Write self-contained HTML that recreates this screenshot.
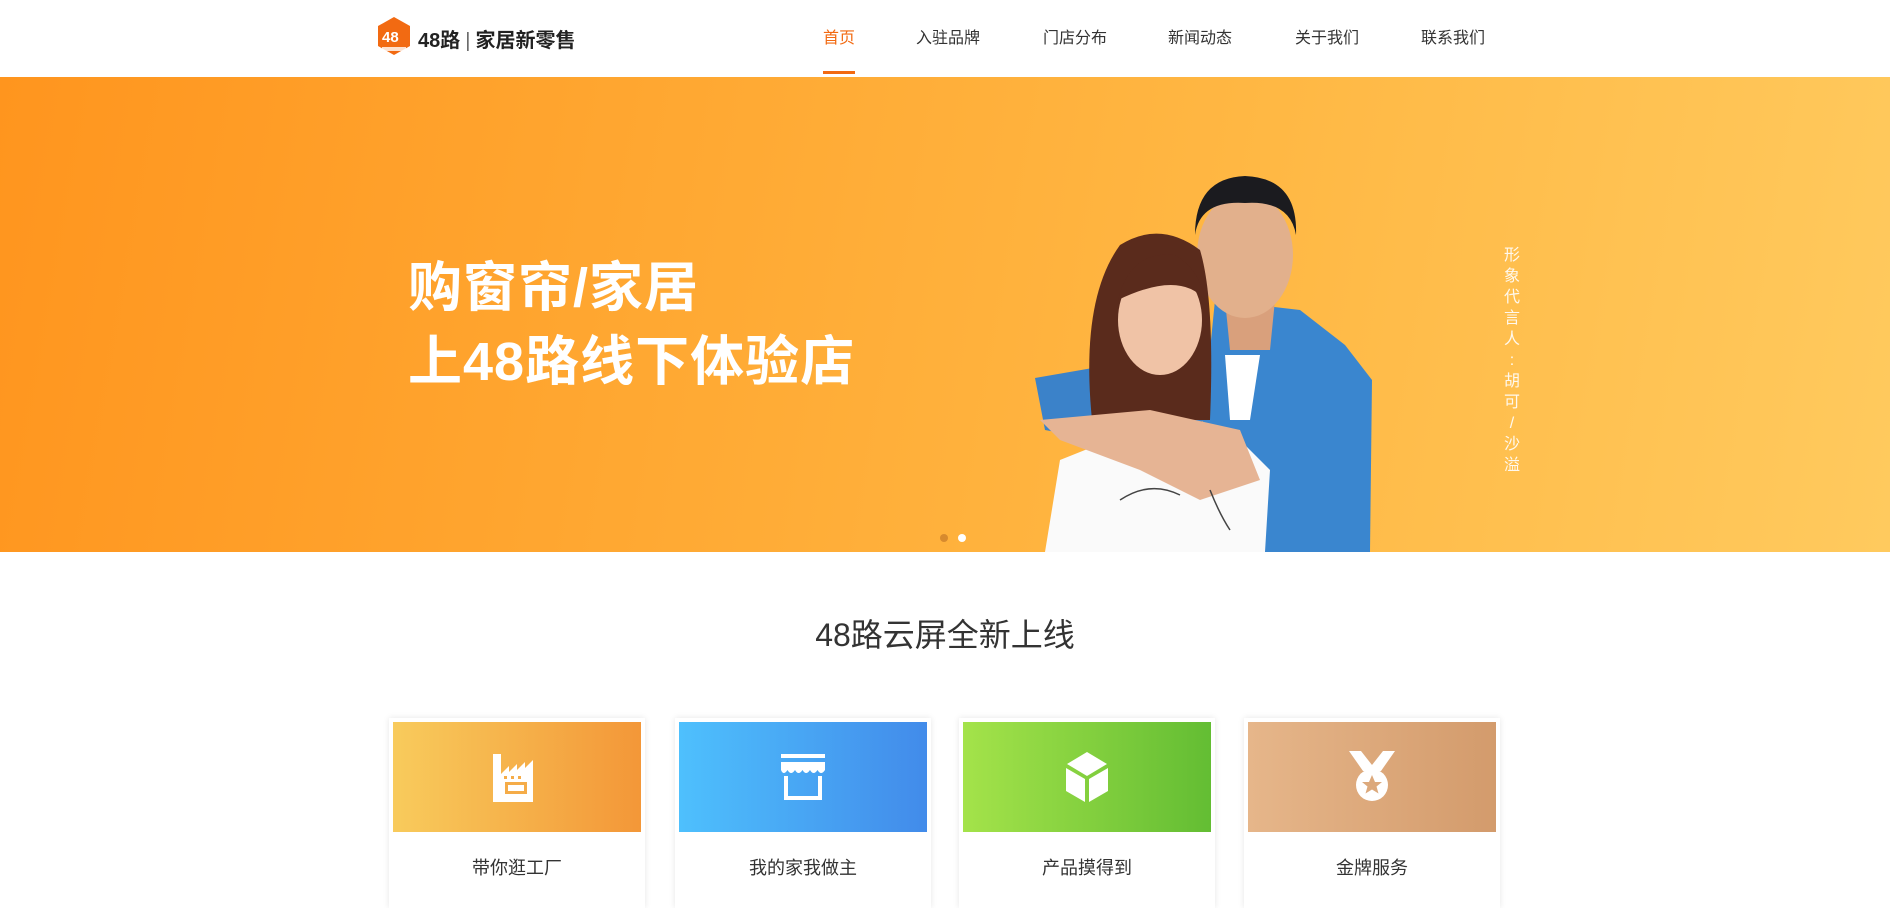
<!DOCTYPE html>
<html><head><meta charset="utf-8"><style>
*{margin:0;padding:0;box-sizing:border-box}
body{width:1890px;height:900px;overflow:hidden;background:#fff;font-family:"Liberation Sans","Noto Sans CJK SC",sans-serif;position:relative}
.hdr{position:absolute;left:0;top:0;width:1890px;height:77px;background:#fff}
.nav a{position:absolute;top:24px;font-size:16px;color:#333;text-decoration:none;white-space:nowrap}
.banner{position:absolute;left:0;top:77px;width:1890px;height:475px;background:linear-gradient(100deg,#ff951e 0%,#ffa832 35%,#ffb844 65%,#ffca5e 100%);overflow:hidden}
.h1{position:absolute;left:408px;color:#fff;font-size:54px;font-weight:bold;letter-spacing:1px;white-space:nowrap;-webkit-text-stroke:0}
.vt{position:absolute;left:1503px;top:168px;width:18px;color:#fff;font-size:16px;line-height:21px;text-align:center;opacity:.9}
.title{position:absolute;left:0;width:1890px;top:610px;text-align:center;font-size:32px;color:#333}
.card{position:absolute;top:718px;width:256px;height:190px;background:#fff;box-shadow:0 0 6px rgba(0,0,0,.1)}
.card .img{position:absolute;left:4px;top:4px;width:248px;height:110px;display:flex;align-items:center;justify-content:center}
.card .lb{position:absolute;left:0;width:256px;top:136px;text-align:center;font-size:18px;color:#333}
</style></head><body>
<div class="hdr">
 <svg style="position:absolute;left:376px;top:16px" width="36" height="40" viewBox="0 0 36 40"><path d="M18 1 L34 10 V30 L18 39 L2 30 V10Z" fill="#f26a12"/><text x="6" y="26" font-size="15" fill="#fff" font-family="Liberation Sans" font-weight="bold">48</text><rect x="6" y="31" width="24" height="4" fill="#fff" opacity=".8"/></svg>
 <div style="position:absolute;left:418px;top:24px;font-size:20px;font-weight:bold;color:#222;white-space:nowrap">48路<span style="font-weight:normal;color:#666;margin:0 5px">|</span>家居新零售</div>
 <div class="nav">
  <a style="left:823px;color:#f26a12">首页</a>
  <a style="left:916px">入驻品牌</a>
  <a style="left:1043px">门店分布</a>
  <a style="left:1168px">新闻动态</a>
  <a style="left:1295px">关于我们</a>
  <a style="left:1421px">联系我们</a>
 </div>
 <div style="position:absolute;left:823px;top:71px;width:32px;height:3px;background:#f26a12"></div>
</div>
<div class="banner">
 <div class="h1" style="top:166px">购窗帘/家居</div>
 <div class="h1" style="top:240px">上48路线下体验店</div>
 <svg style="position:absolute;left:1010px;top:95px" width="380" height="380" viewBox="1010 172 380 380">
  <path d="M1215 300 L1300 310 L1345 345 L1372 380 L1370 552 L1190 552 Z" fill="#3a86cf"/>
  <path d="M1035 378 L1110 365 L1200 340 L1210 420 L1100 440 L1045 430 Z" fill="#3b82c9"/>
  <path d="M1225 355 L1260 355 L1250 420 L1230 420Z" fill="#fff"/>
  <path d="M1225 300 L1275 300 L1270 350 L1230 350Z" fill="#d9a07c"/>
  <ellipse cx="1245" cy="255" rx="48" ry="63" fill="#e2b08c"/>
  <path d="M1195 235 Q1195 178 1245 176 Q1298 178 1296 235 Q1290 200 1245 203 Q1200 200 1195 235Z" fill="#1b1b1f"/>
  <path d="M1092 420 Q1080 300 1120 245 Q1160 220 1200 250 Q1215 300 1210 420Z" fill="#5a2b1c"/>
  <ellipse cx="1160" cy="320" rx="42" ry="55" fill="#f0c3a6"/>
  <path d="M1118 300 Q1130 250 1175 255 Q1200 270 1205 300 Q1180 270 1118 300Z" fill="#5a2b1c"/>
  <path d="M1060 460 L1110 440 L1160 470 L1240 440 L1270 470 L1265 552 L1045 552Z" fill="#fafafa"/>
  <path d="M1040 420 L1150 410 L1240 430 L1260 480 L1200 500 L1140 470 L1060 440Z" fill="#e6b494"/>
  <path d="M1120 500 q30 -20 60 -5 M1210 490 q10 25 20 40" stroke="#444" stroke-width="1.5" fill="none"/>
 </svg>
 <div class="vt">形<br>象<br>代<br>言<br>人<br>:<br>胡<br>可<br>/<br>沙<br>溢</div>
 <div style="position:absolute;left:940px;top:457px;width:8px;height:8px;border-radius:50%;background:#d78a2e"></div>
 <div style="position:absolute;left:958px;top:457px;width:8px;height:8px;border-radius:50%;background:#fff"></div>
</div>
<div class="title">48路云屏全新上线</div>

<div class="card" style="left:389px"><div class="img" style="background:linear-gradient(90deg,#f8cb5c,#f39738)">
 <svg width="52" height="50" viewBox="0 0 52 50"><path d="M2 2h8v20l8-8v6l8-8v6l8-8v6l8-8v42H2Z" fill="#fff"/><rect x="14" y="30" width="22" height="12" fill="#f5ac48"/><rect x="17" y="33" width="16" height="6" fill="#fff"/><rect x="13" y="24" width="3" height="3" fill="#f5ac48"/><rect x="20" y="24" width="3" height="3" fill="#f5ac48"/><rect x="27" y="24" width="3" height="3" fill="#f5ac48"/></svg>
</div><div class="lb">带你逛工厂</div></div>

<div class="card" style="left:675px"><div class="img" style="background:linear-gradient(90deg,#4ec0fd,#428bea)">
 <svg width="46" height="50" viewBox="0 0 46 50"><rect x="1" y="2" width="44" height="4" fill="#fff"/><path d="M1 10h44v8q-4 6-7.5 0q-4 6-7.5 0q-4 6-7.5 0q-4 6-7.5 0q-4 6-7.5 0q-4 6-6.5 0Z" fill="#fff"/><path d="M4 24v24h38V24h-4v20H8V24Z" fill="#fff"/></svg>
</div><div class="lb">我的家我做主</div></div>

<div class="card" style="left:959px"><div class="img" style="background:linear-gradient(90deg,#a4e34a,#63bd33)">
 <svg width="46" height="52" viewBox="0 0 46 52"><path d="M23 1l20 12-20 12-20-12Z" fill="#fff"/><path d="M2 17l19 11v23L2 40Z" fill="#fff"/><path d="M44 17L25 28v23l19-11Z" fill="#fff"/></svg>
</div><div class="lb">产品摸得到</div></div>

<div class="card" style="left:1244px"><div class="img" style="background:linear-gradient(90deg,#e6b68a,#d39b6c)">
 <svg width="50" height="56" viewBox="0 0 50 56"><path d="M2 2h12l11 14 11-14h12L34 22H16Z" fill="#fff"/><circle cx="25" cy="36" r="16" fill="#fff"/><path d="M25 26l3 7h7l-5.5 4.5 2 7-6.5-4-6.5 4 2-7L15 33h7Z" fill="#dca97c"/></svg>
</div><div class="lb">金牌服务</div></div>
</body></html>
